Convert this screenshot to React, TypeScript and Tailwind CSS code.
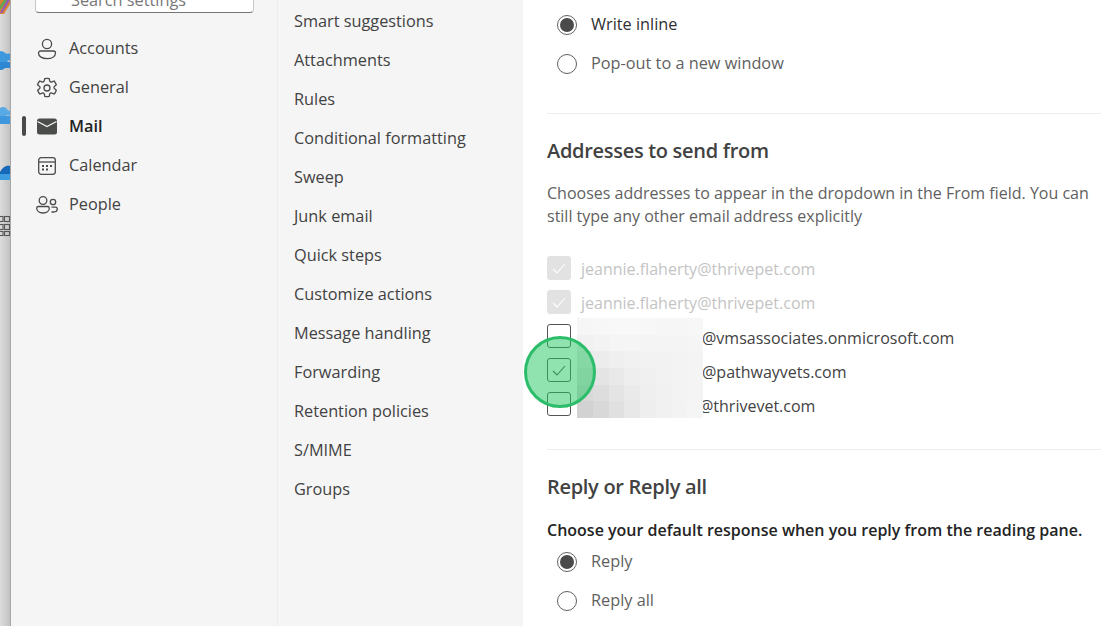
const primaryNav = ["Accounts", "General", "Mail", "Calendar", "People"];

const secondaryNav = [
  "Smart suggestions",
  "Attachments",
  "Rules",
  "Conditional formatting",
  "Sweep",
  "Junk email",
  "Quick steps",
  "Customize actions",
  "Message handling",
  "Forwarding",
  "Retention policies",
  "S/MIME",
  "Groups",
];

const NavIcon = ({ name }: { name: string }) => {
  const line = { fill: "none", stroke: "#4a4a4a", strokeWidth: 1.3 };
  if (name === "Accounts")
    return (
      <svg width="20" height="22" viewBox="0 0 20 22">
        <circle cx="10" cy="6" r="4.6" {...line} />
        <path d="M3.5 13h13a2 2 0 0 1 2 2c0 3.6-3.8 5.6-8.500 5.600S1.500 18.600 1.500 15a2 2 0 0 1 2-2z" {...line} />
      </svg>
    );
  if (name === "General")
    return (
      <svg width="22" height="22" viewBox="0 0 22 22">
        <circle cx="11" cy="11" r="3" {...line} />
        <path
          d="M8.800 1.600a9.700 9.700 0 0 1 4.400 0l.5 2.300a1.500 1.500 0 0 0 2.200 1l2.200-.9a9.700 9.700 0 0 1 2.200 3.800l-1.700 1.500a1.500 1.500 0 0 0 0 2.400l1.700 1.500a9.700 9.700 0 0 1-2.200 3.800l-2.200-.9a1.500 1.500 0 0 0-2.200 1l-.5 2.300a9.700 9.700 0 0 1-4.400 0l-.5-2.300a1.500 1.500 0 0 0-2.200-1l-2.200.9a9.700 9.700 0 0 1-2.200-3.800l1.700-1.500a1.500 1.500 0 0 0 0-2.400L1.500 7.800a9.700 9.700 0 0 1 2.200-3.800l2.200.9a1.500 1.500 0 0 0 2.200-1z"
          {...line}
        />
      </svg>
    );
  if (name === "Calendar")
    return (
      <svg width="18" height="18" viewBox="0 0 18 18">
        <rect x="0.700" y="0.700" width="16.600" height="16.600" rx="2.500" {...line} />
        <path d="M1 5h16" {...line} />
        <g fill="#4a4a4a">
          <rect x="4" y="8" width="2" height="2" />
          <rect x="8" y="8" width="2" height="2" />
          <rect x="12" y="8" width="2" height="2" />
          <rect x="4" y="11.500" width="2" height="2" />
          <rect x="8" y="11.500" width="2" height="2" />
        </g>
      </svg>
    );
  if (name === "People")
    return (
      <svg width="22" height="18" viewBox="0 0 22 18">
        <circle cx="7" cy="4.500" r="3.800" {...line} />
        <path d="M2.500 10.500h9a1.800 1.800 0 0 1 1.800 1.800c0 2.800-2.800 4.700-6.300 4.700S.7 15.100.7 12.300a1.800 1.800 0 0 1 1.800-1.800z" {...line} />
        <circle cx="17" cy="6" r="2.700" {...line} />
        <path d="M15.500 16h2c2.200 0 3.800-1.300 3.800-3.200a1.600 1.600 0 0 0-1.600-1.600h-4.200" {...line} />
      </svg>
    );
  return (
    <svg width="20" height="17" viewBox="0 0 20 17">
      <rect width="20" height="16" y="0.500" rx="2.500" fill="#4a4d49" />
      <path d="M0.500 3.500l9.500 5 9.500-5" fill="none" stroke="#f5f5f5" strokeWidth="1.300" />
    </svg>
  );
};

const Check = ({ color }: { color: string }) => (
  <svg width="14" height="11" viewBox="0 0 14 11" fill="none">
    <path d="M1 6l4 4 8-9" stroke={color} strokeWidth="1.1" />
  </svg>
);

const Radio = ({ on, label, dark }: { on?: boolean; label: string; dark?: boolean }) => (
  <div className="flex h-[39px] items-center gap-[14px] pl-[10px]">
    <span className="flex h-5 w-5 items-center justify-center rounded-full border border-[#616161] bg-white">
      {on && <span className="h-[14px] w-[14px] rounded-full bg-[#4a4a4a]" />}
    </span>
    <span className={dark ? "text-[#303030]" : "text-[#616161]"}>{label}</span>
  </div>
);

const DisabledRow = () => (
  <div className="flex h-[34px] items-center gap-[10px]">
    <span className="flex h-6 w-6 items-center justify-center rounded-[3px] bg-[#e2e2e2]">
      <Check color="#ffffff" />
    </span>
    <span className="mt-[2px] text-[16px] text-[#c4c4c4]">jeannie.flaherty@thrivepet.com</span>
  </div>
);

const AddressRow = ({ suffix, checked, tight }: { suffix: string; checked?: boolean; tight?: boolean }) => (
  <div className="flex h-[34px] items-center">
    <span className="flex h-6 w-6 items-center justify-center rounded-[3px] border border-[#555555] bg-white">
      {checked && <Check color="#555555" />}
    </span>
    <span className={tight ? "ml-[128px] mt-[3px] text-[16px] text-[#424242]" : "ml-[131px] mt-[3px] text-[16px] text-[#424242]"}>{suffix}</span>
  </div>
);

const blurCells = [
  "#f6f6f6", "#f7f7f7", "#f8f8f8", "#f8f8f8", "#f7f7f7", "#f6f6f6", "#f6f6f6", "#f7f7f7",
  "#f1f1f1", "#f3f3f3", "#f5f5f5", "#f5f5f5", "#f4f4f4", "#f4f4f4", "#f4f4f4", "#f5f5f5",
  "#e9e9e9", "#ececec", "#efefef", "#f1f1f1", "#f2f2f2", "#f2f2f2", "#f3f3f3", "#f4f4f4",
  "#e0e0e0", "#e4e4e4", "#e9e9e9", "#eeeeee", "#f0f0f0", "#f2f2f2", "#f3f3f3", "#f4f4f4",
  "#d8d8d8", "#dddddd", "#e4e4e4", "#eaeaea", "#efefef", "#f1f1f1", "#f3f3f3", "#f4f4f4",
  "#d2d2d2", "#d8d8d8", "#e0e0e0", "#e8e8e8", "#eeeeee", "#f1f1f1", "#f3f3f3", "#f5f5f5",
];

const RailIcons = () => (
  <svg width="10" height="240" viewBox="0 0 10 240" className="absolute left-0 top-0">
    <path d="M0 0h10v4L4 14H0z" fill="#d9803a" />
    <path d="M4 0h3L0 10V6z" fill="#5aa84f" />
    <path d="M7 0h3L2 13H0z" fill="#8e5bb5" />
    <circle cx="0" cy="59" r="8" fill="#3f97dd" />
    <circle cx="8.500" cy="57" r="3.500" fill="#3f97dd" />
    <path d="M0 62h10v6H5c-2 2-4 2-5 2z" fill="#2f86d3" />
    <circle cx="3" cy="112" r="5" fill="#58a9e6" />
    <circle cx="8.500" cy="113" r="2.500" fill="#58a9e6" />
    <path d="M0 116h10v8H0z" fill="#3f97dd" />
    <path d="M0 172c2-4 6-7 10-6v8H0z" fill="#1668b8" />
    <path d="M0 174h10v6H0z" fill="#3d9be0" />
    <g fill="none" stroke="#555555" strokeWidth="1.100">
      <rect x="-3" y="216.500" width="6" height="5" />
      <rect x="4.500" y="216.500" width="5" height="5" />
      <rect x="-3" y="224.500" width="6" height="5" />
      <rect x="4.500" y="224.500" width="5" height="5" />
      <rect x="-3" y="231.500" width="6" height="4" />
      <rect x="4.500" y="231.500" width="5" height="4" />
    </g>
  </svg>
);

const App = () => {
  return (
    <div className="flex h-[626px] w-[1120px] overflow-hidden bg-white font-['Open_Sans','Noto_Sans',sans-serif] text-[16.3px] text-[#424242]">
      {/* sliver of the app rail behind the dialog */}
      <div className="relative w-[11px] shrink-0 border-r border-[#a8a8a8] bg-gradient-to-r from-[#dcdcdc] to-[#c2c2c2]">
        <RailIcons />
      </div>

      <aside className="relative w-[267px] shrink-0 border-r border-[#ececec] bg-[#f5f5f5] pl-[14px] pt-[29px]">
        <div className="absolute left-[24px] top-[-12px] flex h-[25px] w-[219px] items-end rounded-b-[4px] border border-[#c8c8c8] border-b-[#757575] bg-white pb-[6px] pl-[35px] text-[#777777]">
          <span className="leading-[11px]">Search settings</span>
        </div>
        {primaryNav.map((name) => (
          <div key={name} className="relative flex h-[39px] items-center">
            {name === "Mail" && <span className="absolute -left-[3px] top-[9px] h-[20px] w-1 rounded-sm bg-[#4a4a4a]" />}
            <span className="flex w-[44px] justify-center">
              <NavIcon name={name} />
            </span>
            <span className={name === "Mail" ? "font-semibold text-[#242424]" : "text-[#424242]"}>{name}</span>
          </div>
        ))}
      </aside>

      <nav className="w-[245px] shrink-0 bg-[#f5f5f5] pl-[16px] pt-[2px]">
        {secondaryNav.map((name) => (
          <div key={name} className="flex h-[39px] items-center">{name}</div>
        ))}
      </nav>

      <main className="min-w-0 flex-1 pl-[24px] pr-[19px]">
        <div className="pt-[5px]">
          <Radio on label="Write inline" dark />
          <Radio label="Pop-out to a new window" />
        </div>
        <div className="mt-[30px] border-t border-[#ededed] pt-[21px]">
          <h2 className="text-[20px] font-semibold leading-[32px] tracking-[-0.3px] text-[#424242]">Addresses to send from</h2>
          <p className="mt-[15px] w-[556px] text-[16px] leading-[23px] text-[#616161]">
            Chooses addresses to appear in the dropdown in the From field. You can still type any other email address explicitly
          </p>
          <div className="mt-[23px]">
            <DisabledRow />
            <DisabledRow />
            <div className="relative">
              <AddressRow suffix="@vmsassociates.onmicrosoft.com" />
              <AddressRow suffix="@pathwayvets.com" checked />
              <AddressRow suffix="@thrivevet.com" tight />
              {/* pixelated redaction over the address names */}
              <div className="absolute left-[30px] top-[-1px] grid h-[100px] w-[126px] grid-cols-8">
                {blurCells.map((c, i) => (
                  <span key={i} style={{ backgroundColor: c }} />
                ))}
              </div>
              {/* click highlight */}
              <div className="absolute left-[-23px] top-[17px] h-[72px] w-[72px] rounded-full border-[3px] border-[#2bbd6a] bg-[#22c55e]/50" />
            </div>
          </div>
        </div>
        <div className="mt-[28px] border-t border-[#ededed] pt-[21px]">
          <h2 className="text-[20px] font-semibold leading-[32px] tracking-[-0.3px] text-[#424242]">Reply or Reply all</h2>
          <p className="mt-[15px] whitespace-nowrap text-[16px] font-semibold leading-[24px] text-[#242424]">Choose your default response when you reply from the reading pane.</p>
          <Radio on label="Reply" />
          <Radio label="Reply all" />
        </div>
      </main>
    </div>
  );
};

export default App;
